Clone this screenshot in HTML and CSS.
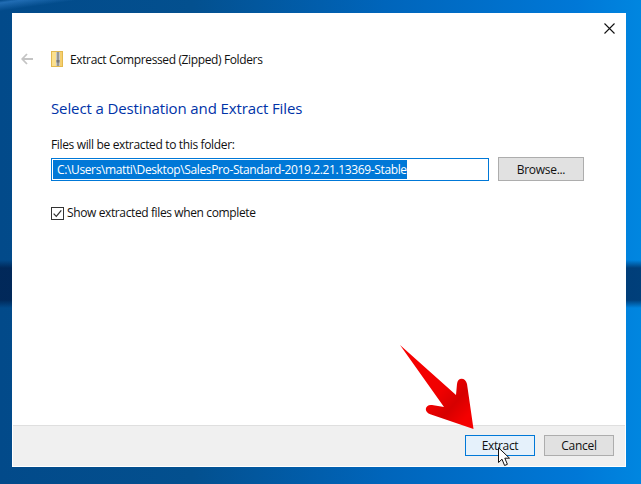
FILE: index.html
```html
<!DOCTYPE html>
<html lang="en">
<head>
<meta charset="utf-8">
<title>Extract Compressed (Zipped) Folders</title>
<link rel="stylesheet" href="styles.css">
</head>
<body>
<div class="desktop">
  <div class="window">
    <div class="closebar">
      <svg class="close" width="11" height="11" viewBox="0 0 11 11"><path d="M.5.5l10 10M10.500.5l-10 10" stroke="#111" stroke-width="1.1" fill="none"/></svg>
    </div>
    <div class="titlebar">
      <svg class="back" width="12" height="12" viewBox="0 0 12 12"><path d="M6 1L1.200 6l4.800 5M1.200 6H12" stroke="#c4c4c4" stroke-width="1.800" fill="none"/></svg>
      <svg class="zip" width="12" height="16" viewBox="0 0 12 16">
        <rect x=".5" y=".5" width="11" height="15" fill="#fbe08f" stroke="#e3b94f"/>
        <rect x="5" y="1" width="4" height="14" fill="#c8c8c4"/>
        <path d="M6 2h2M6 4h2M6 6h2M6 8h2M6 12h2M6 14h2" stroke="#666" stroke-width="1"/>
        <rect x="5.500" y="9" width="3" height="2.500" fill="#777"/>
        <rect x="9" y="1" width="2" height="14" fill="#f6cf6e"/>
      </svg>
      <span class="title">Extract Compressed (Zipped) Folders</span>
    </div>
    <div class="content">
      <h1 class="heading">Select a Destination and Extract Files</h1>
      <label class="field-label">Files will be extracted to this folder:</label>
      <div class="path-row">
        <div class="path-input"><span class="selection">C:\Users\matti\Desktop\SalesPro-Standard-2019.2.21.13369-Stable</span></div>
        <div class="btn browse">Browse...</div>
      </div>
      <div class="check-row">
        <svg class="check" width="13" height="13" viewBox="0 0 13 13"><rect x=".5" y=".5" width="12" height="12" fill="#fff" stroke="#333"/><path d="M2.600 6.600l2.700 2.800 5-6" stroke="#333" stroke-width="1.300" fill="none"/></svg>
        <span>Show extracted files when complete</span>
      </div>
    </div>
    <div class="footer">
      <div class="btn primary">Extract</div>
      <div class="btn">Cancel</div>
    </div>
  </div>
  <svg class="arrow" width="76" height="88" viewBox="0 0 76 88">
    <defs><linearGradient id="red" x1="0" y1="0" x2="1" y2="1"><stop offset="0" stop-color="#f80000"/><stop offset=".55" stop-color="#f00000"/><stop offset=".72" stop-color="#d60000"/><stop offset=".88" stop-color="#f40000"/></linearGradient></defs>
    <path d="M0 1L56 51 57 40C57.500 33 65.500 33 67 40L73.500 85 31 70.500C23 68 25 60 32 61L44 63Z" fill="url(#red)" stroke-linejoin="round"/>
  </svg>
  <svg class="cursor" width="13" height="20" viewBox="0 0 13 20"><path d="M.5.7V15.500L4 12.200 6.600 18.500 9.400 17.300 6.800 11.200H11.500Z" fill="#fff" stroke="#111" stroke-width="1"/></svg>
</div>
</body>
</html>
```
FILE: styles.css
```css
* { box-sizing: border-box; }
html, body { margin: 0; padding: 0; }
body { width: 641px; height: 484px; overflow: hidden; }
.desktop {
  position: relative;
  width: 641px;
  height: 484px;
  padding: 13px 15px 17px 12px;
  background:
    linear-gradient(180deg, transparent 260px, rgba(0,20,60,.62) 268px, rgba(0,20,60,.62) 300px, transparent 308px),
    linear-gradient(172deg, transparent 0, rgba(70,150,230,.45) 3px, transparent 11px, transparent 100%) no-repeat 0 0 / 160px 16px,
    linear-gradient(90deg, #024a8a 0, #03508f 30%, #0065bb 60%, #0078d7 90%, #0086e0 100%);
  font-family: "Open Sans", "Noto Sans", sans-serif;
  font-size: 12px;
  color: #111;
}
.window {
  width: 614px;
  height: 454px;
  background: #fff;
  display: flex;
  flex-direction: column;
  border: 1px solid #fff;
}
.closebar { display: flex; justify-content: flex-end; padding: 9px 10px 0 0; height: 23px; }
.close { display: block; }
.titlebar { display: flex; align-items: center; height: 16px; margin-top: 14px; padding-left: 8px; }
.back { margin-right: 18px; }
.zip { margin-right: 7px; }
.title { letter-spacing: -.37px; white-space: nowrap; }
.content { flex: 1; padding: 0 0 0 38px; }
.heading { margin: 31px 0 0; font-size: 15px; font-weight: 400; color: #0033a8; line-height: 20px; letter-spacing: -.12px; }
.field-label { display: block; margin-top: 19px; line-height: 16px; letter-spacing: -.35px; }
.path-row { display: flex; align-items: center; margin-top: 4px; gap: 9px; }
.path-input { width: 438px; height: 23px; border: 1px solid #0078d7; padding: 1px; display: flex; background: #fff; }
.selection { background: #0078d7; color: #fff; padding: 0 0 0 4px; width: 354px; line-height: 19px; white-space: nowrap; letter-spacing: -.37px; }
.btn { width: 70px; height: 21px; background: #e1e1e1; border: 1px solid #adadad; display: flex; align-items: center; justify-content: center; letter-spacing: -.3px; }
.browse { width: 86px; height: 24px; }
.check-row { display: flex; align-items: center; gap: 3px; margin-top: 24px; line-height: 16px; letter-spacing: -.38px; }
.footer { height: 41px; background: #f0f0f0; border-top: 1px solid #dfdfdf; display: flex; justify-content: flex-end; align-items: flex-start; gap: 9px; padding: 9px 11px 0 0; }
.primary { background: #e5f1fb; border: 1px solid #0078d7; }
.arrow { position: absolute; left: 400px; top: 344px; }
.cursor { position: absolute; left: 498px; top: 447px; }
```
